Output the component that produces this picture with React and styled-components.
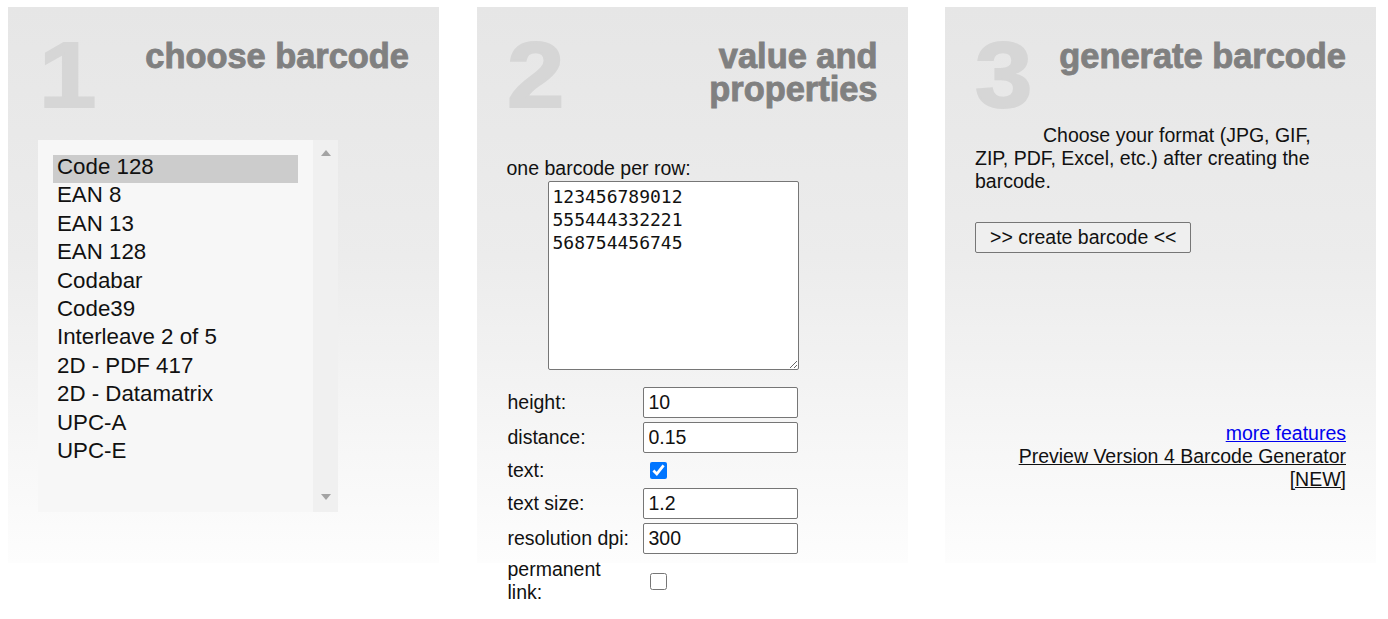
import React from "react";
import styled, { createGlobalStyle } from "styled-components";

const Global = createGlobalStyle`
  html, body { margin: 0; padding: 0; background: #ffffff; }
  body {
    font-family: "Liberation Sans", Arial, sans-serif;
    font-size: 19.5px;
    color: #111;
  }
  * { box-sizing: border-box; }
`;

const Page = styled.div`
  display: flex;
  gap: 37.5px;
  padding: 7px 8px 0;
  min-height: 619px;
  align-items: flex-start;
`;

const Panel = styled.section`
  flex: none;
  width: 431px;
  height: 556px;
  padding: 21px 30px 0;
  background: linear-gradient(to bottom, #e6e6e6 0%, #ececec 45%, #fdfdfd 100%);
`;

const Header = styled.div`
  display: flex;
  align-items: flex-start;
  gap: 12px;
`;

const StepNumber = styled.div`
  width: 58px;
  font-size: 92px;
  line-height: 94px;
  font-weight: 700;
  color: #d6d6d6;
  -webkit-text-stroke: 2px #d6d6d6;
  transform: scaleX(1.12);
  transform-origin: left center;
  margin-left: ${(p) => p.$shift || 0}px;
`;

const Title = styled.h2`
  flex: 1;
  margin: 12px 0 0;
  text-align: right;
  font-size: 34.4px;
  line-height: 33px;
  font-weight: 700;
  color: #808080;
  -webkit-text-stroke: 0.9px #808080;
`;

/* ---- panel 1 : list ---- */
const ListBox = styled.div`
  margin-top: 18px;
  width: 300px;
  height: 372px;
  display: flex;
  background: #f7f7f7;
`;

const Options = styled.ul`
  flex: 1;
  list-style: none;
  margin: 0;
  padding: 15px;
  font-size: 22.3px;
`;

const Option = styled.li`
  height: 28.4px;
  line-height: 23px;
  padding: 0 4px;
  color: #111;
  background: ${(p) => (p.$selected ? "#cccccc" : "transparent")};
`;

const ScrollTrack = styled.div`
  width: 25px;
  background: #f0f0f0;
  display: flex;
  flex-direction: column;
  justify-content: space-between;
  align-items: center;
  padding: 10px 0 12px;
`;

const Arrow = styled.span`
  width: 0;
  height: 0;
  border-left: 5.5px solid transparent;
  border-right: 5.5px solid transparent;
  ${(p) =>
    p.$down
      ? "border-top: 6px solid #a3a3a3;"
      : "border-bottom: 6px solid #a3a3a3;"}
`;

/* ---- panel 2 : form ---- */
const FieldLabel = styled.div`
  margin-top: 35px;
  line-height: 22px;
`;

const CodesArea = styled.textarea`
  display: block;
  margin: 2px 0 0 41px;
  width: 251px;
  height: 189px;
  padding: 3px 4px;
  border: 1px solid #767676;
  border-radius: 2px;
  background: #fff;
  font-family: "DejaVu Sans Mono", "Liberation Mono", monospace;
  font-size: 18px;
  line-height: 23px;
  color: #111;
  resize: both;
`;

const FormGrid = styled.div`
  display: grid;
  grid-template-columns: 135px 155px;
  row-gap: 4px;
  margin: 17px 0 0 1px;
  align-items: center;
`;

const RowLabel = styled.div`
  line-height: 23px;
`;

const TextInput = styled.input`
  width: 155px;
  height: 31px;
  padding: 0 5px;
  border: 1px solid #767676;
  border-radius: 2px;
  background: #fff;
  font-family: "Liberation Sans", Arial, sans-serif;
  font-size: 19.5px;
  color: #111;
`;

const Check = styled.input`
  display: block;
  width: 17px;
  height: 17px;
  margin: 5px 0 5px 7px;
  accent-color: #0075ff;
`;

/* ---- panel 3 ---- */
const Intro = styled.p`
  margin: 2px 0 0;
  max-width: 342px;
  line-height: 23px;
  text-indent: 68px;
`;

const CreateButton = styled.button`
  display: block;
  margin-top: 29px;
  height: 31px;
  padding: 0 14px;
  border: 1px solid #767676;
  border-radius: 2px;
  background: #efefef;
  font-family: "Liberation Sans", Arial, sans-serif;
  font-size: 19.5px;
  color: #111;
`;

const Links = styled.div`
  margin-top: 169px;
  text-align: right;
  line-height: 23px;
`;

const Link = styled.a`
  display: block;
  color: ${(p) => (p.$blue ? "#0000ee" : "#111")};
  text-decoration: underline;
`;

const barcodes = [
  "Code 128",
  "EAN 8",
  "EAN 13",
  "EAN 128",
  "Codabar",
  "Code39",
  "Interleave 2 of 5",
  "2D - PDF 417",
  "2D - Datamatrix",
  "UPC-A",
  "UPC-E",
];

export default function App() {
  return (
    <>
      <Global />
      <Page>
        <Panel>
          <Header>
            <StepNumber $shift={1}>1</StepNumber>
            <Title>choose barcode</Title>
          </Header>
          <ListBox>
            <Options>
              {barcodes.map((b, i) => (
                <Option key={b} $selected={i === 0}>
                  {b}
                </Option>
              ))}
            </Options>
            <ScrollTrack>
              <Arrow />
              <Arrow $down />
            </ScrollTrack>
          </ListBox>
        </Panel>

        <Panel>
          <Header>
            <StepNumber>2</StepNumber>
            <Title>value and properties</Title>
          </Header>
          <FieldLabel>one barcode per row:</FieldLabel>
          <CodesArea
            defaultValue={"123456789012\n555444332221\n568754456745"}
          />
          <FormGrid>
            <RowLabel>height:</RowLabel>
            <TextInput defaultValue="10" />
            <RowLabel>distance:</RowLabel>
            <TextInput defaultValue="0.15" />
            <RowLabel>text:</RowLabel>
            <div>
              <Check type="checkbox" defaultChecked />
            </div>
            <RowLabel>text size:</RowLabel>
            <TextInput defaultValue="1.2" />
            <RowLabel>resolution dpi:</RowLabel>
            <TextInput defaultValue="300" />
            <RowLabel>
              permanent
              <br />
              link:
            </RowLabel>
            <div>
              <Check type="checkbox" />
            </div>
          </FormGrid>
        </Panel>

        <Panel>
          <Header>
            <StepNumber>3</StepNumber>
            <Title>generate barcode</Title>
          </Header>
          <Intro>
            Choose your format (JPG, GIF, ZIP, PDF, Excel, etc.) after creating
            the barcode.
          </Intro>
          <CreateButton>&gt;&gt; create barcode &lt;&lt;</CreateButton>
          <Links>
            <Link href="#" $blue>
              more features
            </Link>
            <Link href="#">Preview Version 4 Barcode Generator</Link>
            <Link href="#">[NEW]</Link>
          </Links>
        </Panel>
      </Page>
    </>
  );
}
